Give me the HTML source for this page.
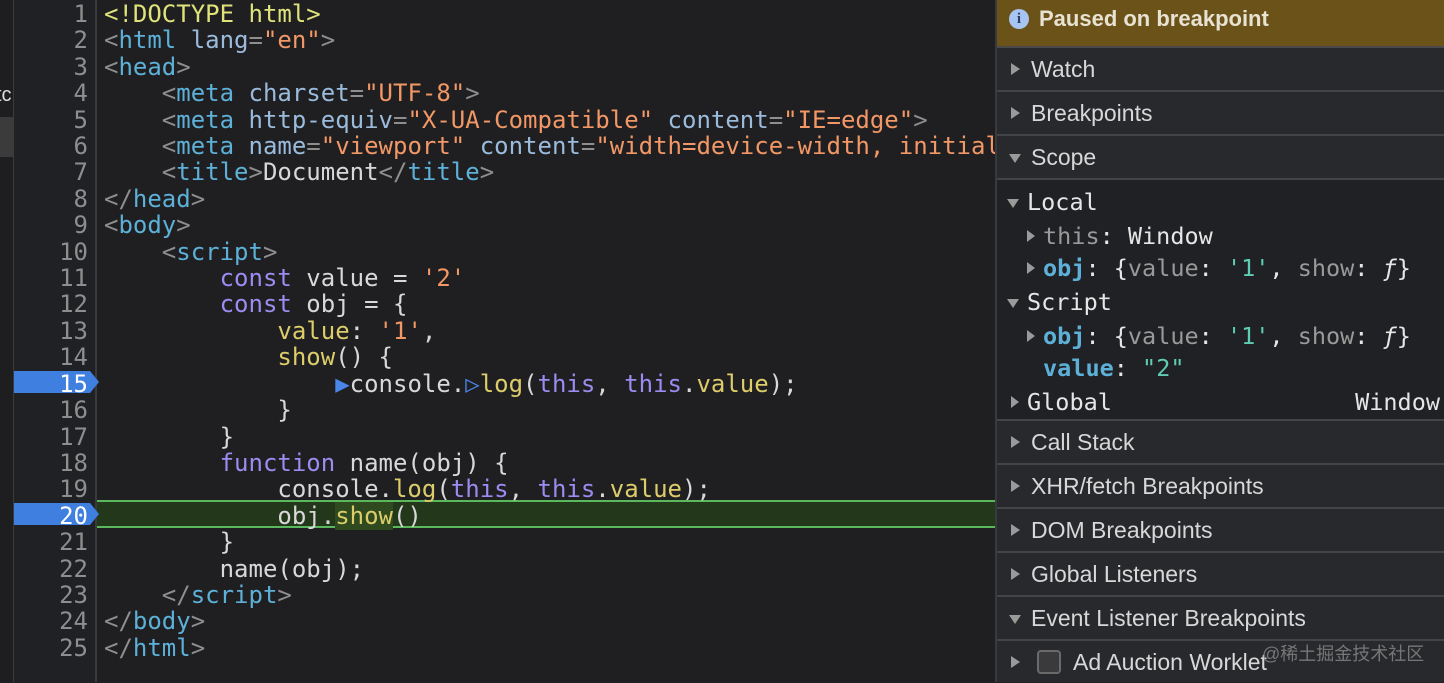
<!DOCTYPE html>
<html><head><style>
body{margin:0;width:1444px;height:682px;overflow:hidden;background:#202124;position:relative;font-family:"Liberation Sans",sans-serif}
.left{position:absolute;left:0;top:0;width:13px;height:682px;background:#1e1e20;border-right:1px solid #3b3b3d;overflow:hidden}
.gut{position:absolute;left:14px;top:0;width:81px;height:682px;background:#202124;border-right:2px solid #3a3a3c}
.code{position:absolute;left:97px;top:0;width:898px;height:682px;background:#1f1f21}
.ln,.cl{position:absolute;font-family:"DejaVu Sans Mono","Liberation Mono",monospace;font-size:24px;line-height:26.4px;white-space:pre}
.ln{left:14px;width:74px;text-align:right;color:#8e8e8e;top:1px}
.cl{left:104px;top:1px;color:#d8d8d8}
.t{color:#5db0d7}.a{color:#9bbbdc}.s{color:#f29766}.k{color:#9a8cf0}.y{color:#dccd6a}.d{color:#dfe37a}.p{color:#8e8e8e}
.bp{position:absolute;left:14px;width:76px;height:22px;background:#3f7fe0;color:#fff}
.bp:after{content:"";position:absolute;right:-9px;top:0;border-left:9px solid #3f7fe0;border-top:11px solid transparent;border-bottom:11px solid transparent}
.cur{position:absolute;left:97px;top:500px;width:898px;height:28px;background:#23381a;border-top:2px solid #5cb85c;border-bottom:2px solid #5cb85c;box-sizing:border-box}
.right{position:absolute;left:995px;top:0;width:449px;height:682px;background:#28292c;border-left:2px solid #3a3a3c}
.hdr{height:46px;background:#6a5219;color:#e8e2d2;font-weight:bold;font-size:22px;line-height:38px;padding-left:42px;position:relative;border-bottom:2px solid #4a4a4a}
.hdr i{position:absolute;left:12px;top:9px;width:20px;height:20px;border-radius:50%;background:#a7c4f2;color:#2b3f66;font-style:normal;font-size:15px;line-height:20px;text-align:center;font-family:"Liberation Serif",serif;font-weight:bold}
.sec{height:42px;border-bottom:2px solid #434447;color:#d8d8d8;font-size:23px;line-height:42px;padding-left:34px;position:relative}
.sec:before{content:"";position:absolute;left:14px;top:15px;border-left:9px solid #9a9a9a;border-top:6px solid transparent;border-bottom:6px solid transparent}
.sec.o:before{left:12px;top:18px;border-top:9px solid #9a9a9a;border-left:6px solid transparent;border-right:6px solid transparent;border-bottom:0}
.scope{height:239px;border-bottom:2px solid #434447;position:relative;background:#202124;font-family:"DejaVu Sans Mono",monospace;font-size:23.5px;color:#e6e6e6}
.r{position:absolute;white-space:pre;line-height:30px}
.tr:before{content:"";position:absolute;left:-16px;top:9px;border-left:8px solid #9a9a9a;border-top:6px solid transparent;border-bottom:6px solid transparent}
.tro:before{content:"";position:absolute;left:-20px;top:12px;border-top:9px solid #9a9a9a;border-left:6px solid transparent;border-right:6px solid transparent}
.g{color:#9a9a9a}.b{color:#5db0d7;font-weight:bold}.c{color:#5fcdb4}
.cb{display:inline-block;width:20px;height:20px;border:2px solid #6a6a6a;border-radius:4px;background:#3a3a3c;vertical-align:middle;margin-right:12px;margin-top:-4px}
.wm{position:absolute;left:1262px;top:640px;color:#8a8a8a;font-size:18px;font-family:"Liberation Sans","Noto Sans CJK SC",sans-serif;opacity:.8}
</style></head><body>
<div class="left"><div style="position:absolute;left:0;top:117px;width:13px;height:40px;background:#3b3b3c"></div><div style="position:absolute;left:-4px;top:84px;color:#ddd;font-size:20px">tc</div></div>
<div class="gut"></div>
<div class="code"></div>
<div class="cur"></div>
<div class="bp" style="top:371px"></div>
<div class="bp" style="top:503px"></div>
<div class="ln">1
2
3
4
5
6
7
8
9
10
11
12
13
14
<span style="color:#fff">15</span>
16
17
18
19
<span style="color:#fff">20</span>
21
22
23
24
25</div>
<div class="cl"><span class="d">&lt;!DOCTYPE html&gt;</span>
<span class="p">&lt;</span><span class="t">html</span> <span class="a">lang</span><span class="p">=</span><span class="s">"en"</span><span class="p">&gt;</span>
<span class="p">&lt;</span><span class="t">head</span><span class="p">&gt;</span>
    <span class="p">&lt;</span><span class="t">meta</span> <span class="a">charset</span><span class="p">=</span><span class="s">"UTF-8"</span><span class="p">&gt;</span>
    <span class="p">&lt;</span><span class="t">meta</span> <span class="a">http-equiv</span><span class="p">=</span><span class="s">"X-UA-Compatible"</span> <span class="a">content</span><span class="p">=</span><span class="s">"IE=edge"</span><span class="p">&gt;</span>
    <span class="p">&lt;</span><span class="t">meta</span> <span class="a">name</span><span class="p">=</span><span class="s">"viewport"</span> <span class="a">content</span><span class="p">=</span><span class="s">"width=device-width, initial</span>
    <span class="p">&lt;</span><span class="t">title</span><span class="p">&gt;</span>Document<span class="p">&lt;/</span><span class="t">title</span><span class="p">&gt;</span>
<span class="p">&lt;/</span><span class="t">head</span><span class="p">&gt;</span>
<span class="p">&lt;</span><span class="t">body</span><span class="p">&gt;</span>
    <span class="p">&lt;</span><span class="t">script</span><span class="p">&gt;</span>
        <span class="k">const</span> value = <span class="s">'2'</span>
        <span class="k">const</span> obj = {
            <span class="y">value</span>: <span class="s">'1'</span>,
            <span class="y">show</span>() {
                <span style="color:#4a86e8">&#9654;</span>console.<span style="color:#4a86e8">&#9655;</span><span class="y">log</span>(<span class="k">this</span>, <span class="k">this</span>.<span class="y">value</span>);
            }
        }
        <span class="k">function</span> name(obj) {
            console.<span class="y">log</span>(<span class="k">this</span>, <span class="k">this</span>.<span class="y">value</span>);
            obj.<span class="y" style="background:#2f4a1e">show</span>()
        }
        name(obj);
    <span class="p">&lt;/</span><span class="t">script</span><span class="p">&gt;</span>
<span class="p">&lt;/</span><span class="t">body</span><span class="p">&gt;</span>
<span class="p">&lt;/</span><span class="t">html</span><span class="p">&gt;</span></div>
<div class="right">
<div class="hdr"><i>i</i>Paused on breakpoint</div>
<div class="sec">Watch</div>
<div class="sec">Breakpoints</div>
<div class="sec o">Scope</div>
<div class="scope">
<div class="r tro" style="left:30px;top:7px">Local</div>
<div class="r tr" style="left:46px;top:41px"><span class="g">this</span>: Window</div>
<div class="r tr" style="left:46px;top:73px"><span class="b">obj</span>: {<span class="g">value</span>: <span class="c">'1'</span>, <span class="g">show</span>: <i>ƒ</i>}</div>
<div class="r tro" style="left:30px;top:107px">Script</div>
<div class="r tr" style="left:46px;top:141px"><span class="b">obj</span>: {<span class="g">value</span>: <span class="c">'1'</span>, <span class="g">show</span>: <i>ƒ</i>}</div>
<div class="r" style="left:46px;top:173px"><span class="b">value</span>: <span class="c">"2"</span></div>
<div class="r tr" style="left:30px;top:207px">Global</div>
<div class="r" style="right:6px;top:207px">Window</div>
</div>
<div class="sec">Call Stack</div>
<div class="sec">XHR/fetch Breakpoints</div>
<div class="sec">DOM Breakpoints</div>
<div class="sec">Global Listeners</div>
<div class="sec o">Event Listener Breakpoints</div>
<div class="sec" style="padding-left:40px;border:0"><span class="cb"></span>Ad Auction Worklet</div>
</div>
<div class="wm">@稀土掘金技术社区</div>
</body></html>
